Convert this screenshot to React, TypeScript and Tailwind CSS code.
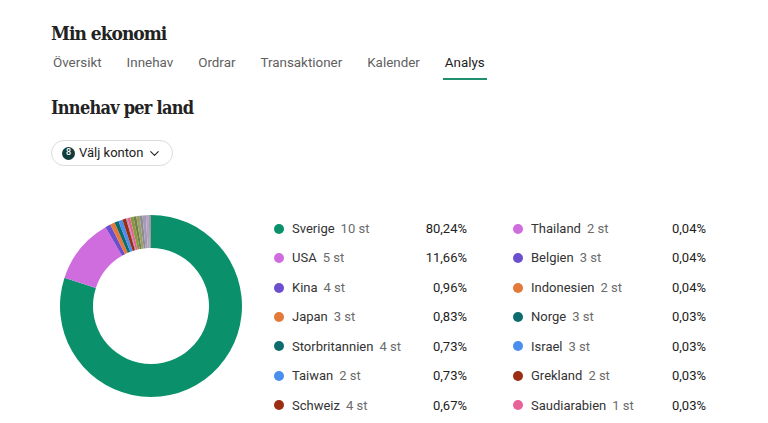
import { ChevronDown } from "lucide-react";

type Row = { name: string; count: number; pct: number; color: string };

const left: Row[] = [
  { name: "Sverige", count: 10, pct: 80.24, color: "#0a916b" },
  { name: "USA", count: 5, pct: 11.66, color: "#cf6ddf" },
  { name: "Kina", count: 4, pct: 0.96, color: "#6b4fcf" },
  { name: "Japan", count: 3, pct: 0.83, color: "#e37a3a" },
  { name: "Storbritannien", count: 4, pct: 0.73, color: "#0e6b6e" },
  { name: "Taiwan", count: 2, pct: 0.73, color: "#4a8ef0" },
  { name: "Schweiz", count: 4, pct: 0.67, color: "#9a2d12" },
];

const right: Row[] = [
  { name: "Thailand", count: 2, pct: 0.04, color: "#cf6ddf" },
  { name: "Belgien", count: 3, pct: 0.04, color: "#6b4fcf" },
  { name: "Indonesien", count: 2, pct: 0.04, color: "#e37a3a" },
  { name: "Norge", count: 3, pct: 0.03, color: "#0e6b6e" },
  { name: "Israel", count: 3, pct: 0.03, color: "#4a8ef0" },
  { name: "Grekland", count: 2, pct: 0.03, color: "#9a2d12" },
  { name: "Saudiarabien", count: 1, pct: 0.03, color: "#e8629a" },
];

// the rest of the ring, countries not shown in the legend
const rest = [
  { pct: 0.5, color: "#e8629a" },
  { pct: 0.6, color: "#8a9a3c" },
  { pct: 0.5, color: "#6f7f4a" },
  { pct: 0.6, color: "#9aa06a" },
  { pct: 0.5, color: "#8c8c8c" },
  { pct: 0.6, color: "#a69ab8" },
  { pct: 0.5, color: "#b3a3c8" },
  { pct: 0.4, color: "#9c9c9c" },
];

const tabs = ["Översikt", "Innehav", "Ordrar", "Transaktioner", "Kalender", "Analys"];

function fmt(n: number) {
  return n.toFixed(2).replace(".", ",") + "%";
}

function Donut() {
  const slices = [...left, ...right, ...rest];
  const total = slices.reduce((s, x) => s + x.pct, 0);
  const cx = 92;
  const cy = 92;
  const R = 91;
  const r = 58;
  let acc = 0;
  const pt = (rad: number, a: number) =>
    `${(cx + rad * Math.sin(a)).toFixed(3)} ${(cy - rad * Math.cos(a)).toFixed(3)}`;
  return (
    <svg width="184" height="184" viewBox="0 0 184 184">
      {slices.map((s, i) => {
        const a0 = (acc / total) * Math.PI * 2;
        acc += s.pct;
        const a1 = (acc / total) * Math.PI * 2;
        const large = a1 - a0 > Math.PI ? 1 : 0;
        const d = `M ${pt(R, a0)} A ${R} ${R} 0 ${large} 1 ${pt(R, a1)} L ${pt(r, a1)} A ${r} ${r} 0 ${large} 0 ${pt(r, a0)} Z`;
        return <path key={i} d={d} fill={s.color} />;
      })}
    </svg>
  );
}

function Legend({ rows }: { rows: Row[] }) {
  return (
    <div className="flex flex-col">
      {rows.map((row) => (
        <div key={row.name} className="flex h-[29.45px] items-center text-[13px]">
          <span className="h-[10px] w-[10px] rounded-full" style={{ backgroundColor: row.color }} />
          <span className="ml-[8px] text-[#333333]">{row.name}</span>
          <span className="ml-[6px] text-[#6b6b6b]">{row.count} st</span>
          <span className="ml-auto text-[#222222]">{fmt(row.pct)}</span>
        </div>
      ))}
    </div>
  );
}

export default function App() {
  return (
    <main className="min-h-screen bg-white px-[51px] pt-[19px] font-['Roboto','Liberation_Sans',sans-serif] text-[#222222]">
      <h1 className="font-['Roboto_Slab','DejaVu_Serif_Condensed','DejaVu_Serif',serif] text-[19px] font-bold leading-[28px] tracking-[-1px]">
        Min ekonomi
      </h1>

      <nav className="mt-[6px] flex gap-[21px] text-[13.4px] leading-[20px]">
        {tabs.map((t) => (
          <div
            key={t}
            className={
              t === "Analys"
                ? "border-b-2 border-[#1f8f70] px-[2px] pb-[5px] text-[#222222]"
                : "border-b-2 border-transparent px-[2px] pb-[5px] text-[#606060]"
            }
          >
            {t}
          </div>
        ))}
      </nav>

      <h2 className="mt-[15px] font-['Roboto_Slab','DejaVu_Serif_Condensed','DejaVu_Serif',serif] text-[18px] font-bold leading-[26px] tracking-[-0.75px]">
        Innehav per land
      </h2>

      <button className="mt-[19px] flex h-[26px] items-center gap-[4px] rounded-full border border-[#dcdcdc] pl-[10px] pr-[10px] text-[13px] text-[#222222]">
        <span className="flex h-[13px] w-[13px] items-center justify-center rounded-full bg-[#123c3c] text-[9px] font-medium text-white">
          8
        </span>
        <span>Välj konton</span>
        <ChevronDown size={15} strokeWidth={1.75} />
      </button>

      <section className="mt-[48px] flex">
        <div className="ml-[8px]">
          <Donut />
        </div>
        <div className="ml-[31px] grid grid-cols-[193px_193px] gap-[46px]">
          <Legend rows={left} />
          <Legend rows={right} />
        </div>
      </section>
    </main>
  );
}
